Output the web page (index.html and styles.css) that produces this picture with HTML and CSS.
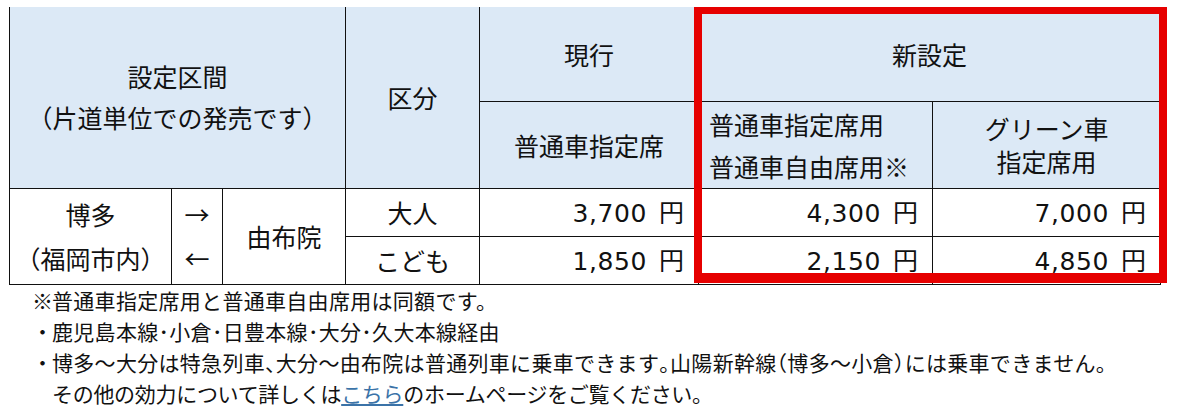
FILE: index.html
```html
<!DOCTYPE html>
<html lang="ja">
<head>
<meta charset="utf-8">
<link rel="stylesheet" href="styles.css">
</head>
<body>
<div class="wrap">
  <table class="fare">
    <colgroup>
      <col class="c1"><col class="c2"><col class="c3"><col class="c4"><col class="c5"><col class="c6"><col class="c7">
    </colgroup>
    <tr class="h1">
      <th colspan="3" rowspan="2" class="hd"><span class="l41">設定区間</span><span class="l41">（片道単位での発売です）</span></th>
      <th rowspan="2" class="hd kubun">区分</th>
      <th class="hd">現行</th>
      <th colspan="2" class="hd">新設定</th>
    </tr>
    <tr class="h2">
      <th class="hd">普通車指定席</th>
      <th class="hd left"><span class="l42">普通車指定席用</span><span class="l42">普通車自由席用※</span></th>
      <th class="hd"><span class="l33">グリーン車</span><span class="l33">指定席用</span></th>
    </tr>
    <tr class="r">
      <td rowspan="2" class="two">博多<br>（福岡市内）</td>
      <td rowspan="2" class="two">→<br>←</td>
      <td rowspan="2">由布院</td>
      <td>大人</td>
      <td class="price"><span class="num">3,700</span>円</td>
      <td class="price"><span class="num">4,300</span>円</td>
      <td class="price"><span class="num">7,000</span>円</td>
    </tr>
    <tr class="r">
      <td>こども</td>
      <td class="price"><span class="num">1,850</span>円</td>
      <td class="price"><span class="num">2,150</span>円</td>
      <td class="price"><span class="num">4,850</span>円</td>
    </tr>
  </table>
  <div class="highlight"></div>
  <ul class="notes">
    <li><span class="mk">※</span><span>普通車指定席用と普通車自由席用は同額です。</span></li>
    <li><span class="mk">・</span><span>鹿児島本線･小倉･日豊本線･大分･久大本線経由</span></li>
    <li><span class="mk">・</span><span>博多～大分は特急列車<span class="hw">、</span>大分～由布院は普通列車に乗車できます<span class="hw">。</span>山陽新幹線<span class="hw">（</span>博多～小倉<span class="hw">）</span>には乗車できません。<br><span class="tight">その他の効力について詳しくは<a href="#" class="link">こちら</a>のホームページをご覧ください。</span></span></li>
  </ul>
</div>
</body>
</html>
```
FILE: styles.css
```css
html, body {
  margin: 0;
  padding: 0;
  background: #fff;
}
body {
  font-family: "Noto Sans CJK JP", "Noto Sans", sans-serif;
  color: #111;
}
.wrap {
  position: relative;
  padding: 7px 0 0 9px;
}
.fare {
  border-collapse: collapse;
  table-layout: fixed;
  width: 1151px;
  font-size: 25px;
}
.c1 { width: 162px; }
.c2 { width: 51px; }
.c3 { width: 123px; }
.c4 { width: 134px; }
.c5 { width: 219px; }
.c6 { width: 234px; }
.c7 { width: 228px; }
.fare th, .fare td {
  border: 1px solid #111;
  padding: 0;
  text-align: center;
  vertical-align: middle;
  font-weight: normal;
  line-height: 44px;
}
.fare tr.h1 th { border-top: none; }
.hd { background: #dce9f6; }
.h1 { height: 94px; }
.h2 { height: 87px; }
.r { height: 44px; }
.kubun { padding-top: 14px; }
.l41, .l42, .l33 { display: block; }
.l41 { line-height: 41px; }
.l42 { line-height: 42px; }
.l33 { line-height: 33px; }
.fare th.left { text-align: left; padding-left: 10px; }
.fare td.price {
  text-align: right;
  padding-right: 14px;
}
.num {
  font-family: "DejaVu Sans", "Noto Sans CJK JP", sans-serif;
  font-size: 25px;
  letter-spacing: 0.6px;
  margin-right: 12px;
}
.highlight {
  position: absolute;
  left: 694px;
  top: 7px;
  width: 473px;
  height: 276px;
  box-sizing: border-box;
  border-style: solid;
  border-color: #e60000;
  border-width: 7px 8px 10px 8px;
  pointer-events: none;
}
.notes {
  list-style: none;
  margin: 0;
  padding: 0 0 0 23px;
  font-size: 21px;
  line-height: 31px;
  letter-spacing: 0.3px;
}
.notes li {
  display: flex;
}
.mk {
  flex: 0 0 20px;
  width: 20px;
}
.hw {
  font-feature-settings: "halt";
}
.tight {
  letter-spacing: -0.3px;
}
.link {
  color: #3b73a8;
  text-decoration: underline;
}
```
